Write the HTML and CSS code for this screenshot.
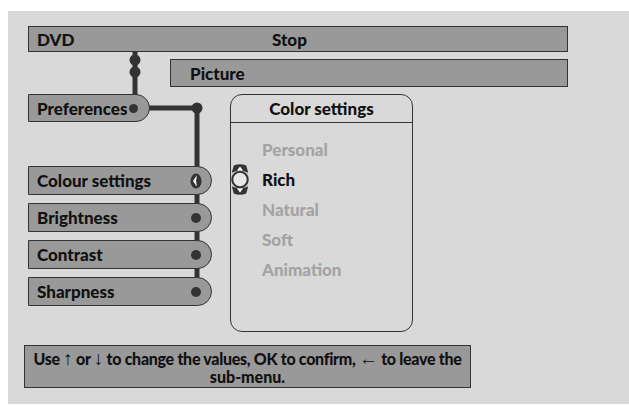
FILE: index.html
```html
<!DOCTYPE html>
<html lang="en">
<head>
    <meta charset="UTF-8">
    <title>DVD - Picture - Colour settings</title>
    <link rel="stylesheet" href="styles.css">
</head>
<body>

    <div class="screen">
        <!-- connector wires, drawn behind the tabs -->
        <svg class="wires" width="621" height="393" viewBox="0 0 621 393">
            <g fill="#333" stroke="#333">
                <line x1="127" y1="41" x2="127" y2="84" stroke-width="5"/>
                <circle cx="127" cy="49" r="5.5" stroke="none"/>
                <circle cx="127" cy="61" r="5.5" stroke="none"/>
                <line x1="140" y1="97" x2="189" y2="97" stroke-width="5"/>
                <circle cx="189" cy="97" r="5.5" stroke="none"/>
                <line x1="189" y1="97" x2="189" y2="282" stroke-width="5"/>
            </g>
        </svg>

        <div class="bar top-bar">
            <span class="source">DVD</span>
            <span class="state">Stop</span>
        </div>
        <div class="bar sub-bar">Picture</div>

        <div class="main">
            <div class="menu">
                <div class="tab pref-tab">Preferences<span class="dot"></span></div>
                <ul class="items">
                    <li class="tab">Colour settings
                        <svg class="active-mark" width="12" height="16" viewBox="0 0 12 16">
                            <ellipse cx="6" cy="8" rx="5.5" ry="7.5" fill="#333"/>
                            <path d="M6.8 2.2 L3 8 L6.8 13.8 Q5.4 8 6.8 2.2 Z" fill="#fff"/>
                        </svg>
                    </li>
                    <li class="tab">Brightness<span class="dot"></span></li>
                    <li class="tab">Contrast<span class="dot"></span></li>
                    <li class="tab">Sharpness<span class="dot"></span></li>
                </ul>
            </div>

            <div class="panel">
                <div class="panel-head">Color settings</div>
                <ul class="options">
                    <li>Personal</li>
                    <li class="selected">
                        <svg class="spinner" width="22" height="31" viewBox="0 0 21 30">
                            <path d="M2.5 8.5 L4.5 1.5 Q10.5 -1 16.5 1.5 L18.5 8.5 Q10.5 4.5 2.5 8.5 Z" fill="#333"/>
                            <path d="M7.5 6.5 L10.5 2.5 L13.5 6.5 Z" fill="#fff"/>
                            <path d="M2.5 21.5 L4.5 28.5 Q10.5 31 16.5 28.5 L18.5 21.5 Q10.5 25.5 2.5 21.5 Z" fill="#333"/>
                            <path d="M7.5 23.5 L10.5 27.5 L13.5 23.5 Z" fill="#fff"/>
                            <circle cx="10.5" cy="15" r="7.5" fill="#e8e8e8" stroke="#333" stroke-width="2"/>
                        </svg>
                        Rich
                    </li>
                    <li>Natural</li>
                    <li>Soft</li>
                    <li>Animation</li>
                </ul>
            </div>
        </div>

        <div class="bar hint-bar"><span class="line">Use <span class="key">↑</span> or <span class="key">↓</span> to change the values, OK to confirm, <span class="key">←</span> to leave the</span><br>sub-menu.</div>
    </div>

</body>
</html>
```

FILE: styles.css
```css
/* osd menu */
body {
    margin: 0;
    background-color: #fff;
    font-family: Lato, "Open Sans", sans-serif;
    font-weight: 900;
    font-size: 17px;
    color: #111;
}

ul {
    list-style: none;
    margin: 0;
    padding: 0;
}

.screen {
    position: relative;
    margin: 11px 0 0 8px;
    height: 393px;
    padding: 15px 0 0 20px;
    box-sizing: border-box;
    background-color: #d9d9d9;
}

.wires {
    position: absolute;
    left: 0;
    top: 0;
}

.bar {
    position: relative;
    box-sizing: border-box;
    background-color: #999;
    border: 1px solid #333;
}

.top-bar {
    display: flex;
    align-items: center;
    width: 540px;
    height: 26px;
    padding-left: 8px;
    margin-bottom: 7px;
}

.top-bar .source {
    width: 235px;
}

.sub-bar {
    display: flex;
    align-items: center;
    width: 398px;
    height: 28px;
    margin: 0 0 7px 142px;
    padding-left: 19px;
}

.main {
    display: flex;
}

.menu {
    width: 202px;
}

.tab {
    position: relative;
    display: flex;
    align-items: center;
    justify-content: space-between;
    box-sizing: border-box;
    height: 29px;
    padding: 0 10px 0 8px;
    background-color: #999;
    border: 1px solid #333;
    border-radius: 0 15px 15px 0;
}

.pref-tab {
    width: 122px;
    height: 28px;
}

.dot {
    width: 10px;
    height: 10px;
    border-radius: 50%;
    background-color: #333;
}

.pref-tab .dot {
    width: 9px;
    height: 9px;
    margin-right: 1px;
}

.items {
    display: flex;
    flex-direction: column;
    gap: 8px;
    margin-top: 44px;
}

.items .tab {
    width: 184px;
}

.active-mark {
    margin-right: -1px;
}

.panel {
    box-sizing: border-box;
    width: 183px;
    height: 238px;
    border: 1px solid #333;
    border-radius: 12px;
}

.panel-head {
    height: 27px;
    line-height: 27px;
    text-align: center;
    border-bottom: 1px solid #333;
}

.options {
    padding: 12px 0 0 31px;
}

.options li {
    position: relative;
    height: 30px;
    line-height: 30px;
    color: #a3a3a3;
}

.options li.selected {
    color: #111;
}

.spinner {
    position: absolute;
    left: -33px;
    top: -1px;
}

.hint-bar {
    width: 447px;
    height: 43px;
    margin: 13px 0 0 -4px;
    padding-top: 3px;
    text-align: center;
    line-height: 18px;
    font-size: 16px;
}

.hint-bar .line {
    white-space: nowrap;
    letter-spacing: -0.3px;
}

.key {
    font-family: "Liberation Sans", sans-serif;
    font-weight: bold;
    font-size: 19px;
    line-height: 1;
}
```
